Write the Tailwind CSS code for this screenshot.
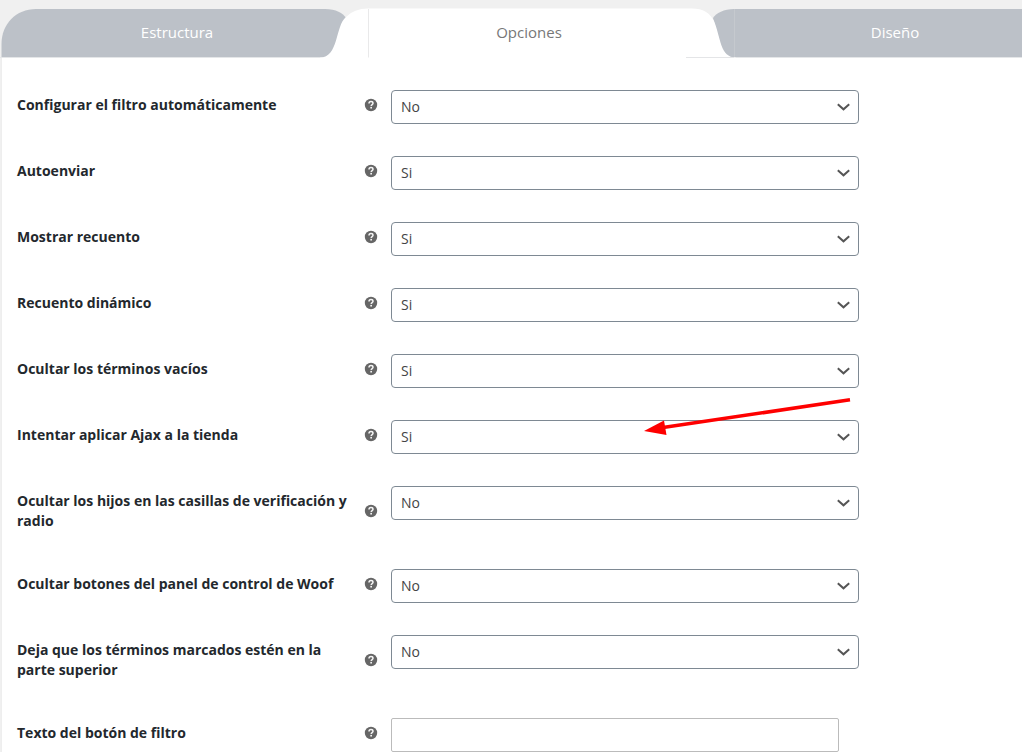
<!DOCTYPE html>
<html lang="es">
<head>
<meta charset="utf-8">
<meta name="viewport" content="width=device-width, initial-scale=1">
<title>Opciones del filtro</title>
<script src="https://cdn.jsdelivr.net/npm/@tailwindcss/browser@4"></script>
</head>
<body class="bg-[#f0f0f0] font-['Open_Sans','Noto_Sans',sans-serif] text-sm text-[#23282d] overflow-x-hidden">
<svg class="hidden" aria-hidden="true">
  <symbol id="help" viewBox="0 0 14 14">
    <circle cx="7" cy="7" r="6.200" fill="#666"/>
    <path d="M5 5.400C5 4.200 5.900 3.600 7 3.600s2 .6 2 1.700c0 1.300-1.800 1.300-1.800 2.700" fill="none" stroke="#f4f4f4" stroke-width="1.500"/>
    <rect x="6.300" y="8.900" width="1.700" height="1.600" fill="#f4f4f4"/>
  </symbol>
  <symbol id="chevron" viewBox="0 0 16 16">
    <path d="M2.800 5.300 8.500 10.300l5.700-5" fill="none" stroke="#555" stroke-width="2"/>
  </symbol>
</svg>

<nav class="relative mt-2 h-[50px] text-[15px]" aria-label="Secciones">
  <svg class="absolute inset-0 size-full" viewBox="0 0 1022 50" preserveAspectRatio="none" aria-hidden="true">
    <path d="M1.500 49.500V36C1.500 16 16 1 36 1H325C336 1 343 5 346 10L330 49.500Z" fill="#bcc1c8"/>
    <path d="M1022 1H734C724 1 716 5 713 10L724 49.500H1022Z" fill="#bcc1c8"/>
    <path d="M320 49.500C339 49.500 335 18 346 9Q354 .500 368 .500H692C703 .500 710 5 714 13C721 30 720 49.500 736 49.500V50H320Z" fill="#fff"/>
    <path d="M368.500 1V49.500" stroke="#e9e9ea"/>
    <path d="M734.500 1V49" stroke="#c5c9ce"/>
    <path d="M686 49.500H734" stroke="#e4e5e7"/>
    <path d="M0 49.500H320M736 49.500H1022" stroke="#e4e6e8"/>
  </svg>
  <div class="relative grid h-full grid-cols-[354fr_350fr_318fr]">
    <button type="button" class="text-white">Estructura</button>
    <button type="button" class="text-[#777]" aria-current="page">Opciones</button>
    <button type="button" class="pl-16 text-white">Diseño</button>
  </div>
</nav>

<main class="ml-px border-l border-[#eee] bg-white pt-8 pl-[15px]">
<form class="flex flex-col gap-8">

  <div class="grid grid-cols-[374px_minmax(0,468px)] items-start">
    <div class="flex items-center justify-between pt-[5px] pr-[13px] pb-1.5">
      <label for="f1" class="w-[334px] leading-5 font-bold">Configurar el filtro automáticamente</label>
      <svg class="size-3.5"><use href="#help"/></svg>
    </div>
    <div class="grid items-center">
      <select id="f1" class="col-start-1 row-start-1 h-[34px] w-full appearance-none rounded border border-[#7e8993] bg-white px-[9px] text-[#444]"><option>No</option><option>Si</option></select>
      <svg class="pointer-events-none col-start-1 row-start-1 mr-2 size-4 justify-self-end"><use href="#chevron"/></svg>
    </div>
  </div>

  <div class="grid grid-cols-[374px_minmax(0,468px)] items-start">
    <div class="flex items-center justify-between pt-[5px] pr-[13px] pb-1.5">
      <label for="f2" class="w-[334px] leading-5 font-bold">Autoenviar</label>
      <svg class="size-3.5"><use href="#help"/></svg>
    </div>
    <div class="grid items-center">
      <select id="f2" class="col-start-1 row-start-1 h-[34px] w-full appearance-none rounded border border-[#7e8993] bg-white px-[9px] text-[#444]"><option>Si</option><option>No</option></select>
      <svg class="pointer-events-none col-start-1 row-start-1 mr-2 size-4 justify-self-end"><use href="#chevron"/></svg>
    </div>
  </div>

  <div class="grid grid-cols-[374px_minmax(0,468px)] items-start">
    <div class="flex items-center justify-between pt-[5px] pr-[13px] pb-1.5">
      <label for="f3" class="w-[334px] leading-5 font-bold">Mostrar recuento</label>
      <svg class="size-3.5"><use href="#help"/></svg>
    </div>
    <div class="grid items-center">
      <select id="f3" class="col-start-1 row-start-1 h-[34px] w-full appearance-none rounded border border-[#7e8993] bg-white px-[9px] text-[#444]"><option>Si</option><option>No</option></select>
      <svg class="pointer-events-none col-start-1 row-start-1 mr-2 size-4 justify-self-end"><use href="#chevron"/></svg>
    </div>
  </div>

  <div class="grid grid-cols-[374px_minmax(0,468px)] items-start">
    <div class="flex items-center justify-between pt-[5px] pr-[13px] pb-1.5">
      <label for="f4" class="w-[334px] leading-5 font-bold">Recuento dinámico</label>
      <svg class="size-3.5"><use href="#help"/></svg>
    </div>
    <div class="grid items-center">
      <select id="f4" class="col-start-1 row-start-1 h-[34px] w-full appearance-none rounded border border-[#7e8993] bg-white px-[9px] text-[#444]"><option>Si</option><option>No</option></select>
      <svg class="pointer-events-none col-start-1 row-start-1 mr-2 size-4 justify-self-end"><use href="#chevron"/></svg>
    </div>
  </div>

  <div class="grid grid-cols-[374px_minmax(0,468px)] items-start">
    <div class="flex items-center justify-between pt-[5px] pr-[13px] pb-1.5">
      <label for="f5" class="w-[334px] leading-5 font-bold">Ocultar los términos vacíos</label>
      <svg class="size-3.5"><use href="#help"/></svg>
    </div>
    <div class="grid items-center">
      <select id="f5" class="col-start-1 row-start-1 h-[34px] w-full appearance-none rounded border border-[#7e8993] bg-white px-[9px] text-[#444]"><option>Si</option><option>No</option></select>
      <svg class="pointer-events-none col-start-1 row-start-1 mr-2 size-4 justify-self-end"><use href="#chevron"/></svg>
    </div>
  </div>

  <div class="grid grid-cols-[374px_minmax(0,468px)] items-start">
    <div class="flex items-center justify-between pt-[5px] pr-[13px] pb-1.5">
      <label for="f6" class="w-[334px] leading-5 font-bold">Intentar aplicar Ajax a la tienda</label>
      <svg class="size-3.5"><use href="#help"/></svg>
    </div>
    <div class="relative grid items-center">
      <select id="f6" class="col-start-1 row-start-1 h-[34px] w-full appearance-none rounded border border-[#7e8993] bg-white px-[9px] text-[#444]"><option>Si</option><option>No</option></select>
      <svg class="pointer-events-none col-start-1 row-start-1 mr-2 size-4 justify-self-end"><use href="#chevron"/></svg>
      <!-- Red pointer calling attention to the Ajax option -->
      <svg class="pointer-events-none absolute -top-6 right-2 h-10 w-[208px]" viewBox="0 0 208 40" aria-hidden="true">
        <path d="M20 31.500 207 3.800" stroke="#fe0000" stroke-width="3.600" fill="none"/>
        <path d="M1 35 21 24.500 23.500 39Z" fill="#fe0000"/>
      </svg>
    </div>
  </div>

  <div class="grid grid-cols-[374px_minmax(0,468px)] items-start">
    <div class="flex items-center justify-between pt-[5px] pr-[13px] pb-1.5">
      <label for="f7" class="w-[334px] leading-5 font-bold">Ocultar los hijos en las casillas de verificación y radio</label>
      <svg class="size-3.5"><use href="#help"/></svg>
    </div>
    <div class="grid items-center">
      <select id="f7" class="col-start-1 row-start-1 h-[34px] w-full appearance-none rounded border border-[#7e8993] bg-white px-[9px] text-[#444]"><option>No</option><option>Si</option></select>
      <svg class="pointer-events-none col-start-1 row-start-1 mr-2 size-4 justify-self-end"><use href="#chevron"/></svg>
    </div>
  </div>

  <div class="grid grid-cols-[374px_minmax(0,468px)] items-start">
    <div class="flex items-center justify-between pt-[5px] pr-[13px] pb-1.5">
      <label for="f8" class="w-[334px] leading-5 font-bold">Ocultar botones del panel de control de Woof</label>
      <svg class="size-3.5"><use href="#help"/></svg>
    </div>
    <div class="grid items-center">
      <select id="f8" class="col-start-1 row-start-1 h-[34px] w-full appearance-none rounded border border-[#7e8993] bg-white px-[9px] text-[#444]"><option>No</option><option>Si</option></select>
      <svg class="pointer-events-none col-start-1 row-start-1 mr-2 size-4 justify-self-end"><use href="#chevron"/></svg>
    </div>
  </div>

  <div class="grid grid-cols-[374px_minmax(0,468px)] items-start">
    <div class="flex items-center justify-between pt-[5px] pr-[13px] pb-1.5">
      <label for="f9" class="w-[334px] leading-5 font-bold">Deja que los términos marcados estén en la parte superior</label>
      <svg class="size-3.5"><use href="#help"/></svg>
    </div>
    <div class="grid items-center">
      <select id="f9" class="col-start-1 row-start-1 h-[34px] w-full appearance-none rounded border border-[#7e8993] bg-white px-[9px] text-[#444]"><option>No</option><option>Si</option></select>
      <svg class="pointer-events-none col-start-1 row-start-1 mr-2 size-4 justify-self-end"><use href="#chevron"/></svg>
    </div>
  </div>

  <div class="grid grid-cols-[374px_minmax(0,448px)] items-start">
    <div class="flex items-center justify-between pt-[5px] pr-[13px] pb-1.5">
      <label for="f10" class="w-[334px] leading-5 font-bold">Texto del botón de filtro</label>
      <svg class="size-3.5"><use href="#help"/></svg>
    </div>
    <input id="f10" type="text" class="h-[34px] w-full rounded-xs border border-[#bbb] bg-white px-2 text-[#444]">
  </div>

</form>
</main>
</body>
</html>
